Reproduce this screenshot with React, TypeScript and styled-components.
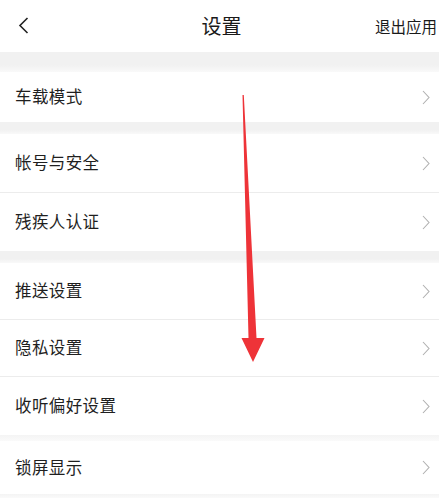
import React from "react";
import styled, { createGlobalStyle } from "styled-components";

const Global = createGlobalStyle`
  html, body { margin: 0; padding: 0; background: #fff; }
  body { font-family: "Noto Sans CJK SC", "Noto Sans", sans-serif; color: #1f1f1f; }
`;

const Page = styled.div`
  position: relative;
  width: 439px;
  height: 498px;
  overflow: hidden;
  background: #fff;
  display: flex;
  flex-direction: column;
`;

const Header = styled.div`
  height: 52px;
  display: grid;
  grid-template-columns: 1fr auto 1fr;
  align-items: center;
  padding: 0 2px;
`;

const BackBtn = styled.div`
  display: flex;
  align-items: center;
  height: 16px;
  margin-top: -2px;
  margin-left: 16px;
`;

const Title = styled.div`
  font-size: 20px;
  color: #1a1a1a;
  margin-left: 4px;
  margin-top: -1px;
`;

const Exit = styled.div`
  justify-self: end;
  font-size: 15.5px;
  color: #1a1a1a;
  margin-top: -1px;
`;

const Gap = styled.div<{ h: number; light?: boolean }>`
  height: ${(p) => p.h}px;
  flex-shrink: 0;
  background: ${(p) =>
    p.light ? "linear-gradient(#f4f4f4, #fafafa)" : "linear-gradient(#f1f1f1 65%, #f9f9f9)"};
`;

const Row = styled.div<{ h: number; line?: boolean }>`
  height: ${(p) => p.h}px;
  flex-shrink: 0;
  display: flex;
  align-items: center;
  justify-content: space-between;
  padding: 0 9px 0 15px;
  box-sizing: border-box;
  border-bottom: ${(p) => (p.line ? "1px solid #ececec" : "none")};
`;

const Label = styled.span`
  font-size: 16.5px;
  color: #1f1f1f;
  letter-spacing: 0.4px;
  margin-top: -2px;
`;

const Chevron = () => (
  <svg width="8" height="15" viewBox="0 0 8 15">
    <path d="M1 1 L7 7.5 L1 14" fill="none" stroke="#b0b0b0" strokeWidth="1.1" />
  </svg>
);

const Arrow = styled.svg`
  position: absolute;
  left: 0;
  top: 0;
  pointer-events: none;
`;

const items: { label: string; h: number; line?: boolean; after?: { h: number; light?: boolean } }[] = [
  { label: "车载模式", h: 50, after: { h: 12 } },
  { label: "帐号与安全", h: 59, line: true },
  { label: "残疾人认证", h: 58, after: { h: 12 } },
  { label: "推送设置", h: 57, line: true },
  { label: "隐私设置", h: 57, line: true },
  { label: "收听偏好设置", h: 58, after: { h: 6, light: true } },
  { label: "锁屏显示", h: 53, after: { h: 4, light: true } },
];

export default function App() {
  return (
    <>
      <Global />
      <Page>
        <Header>
          <BackBtn>
            <svg width="11" height="17" viewBox="0 0 11 17">
              <path d="M9.5 1 L2 8.5 L9.5 16" fill="none" stroke="#222" strokeWidth="1.6" />
            </svg>
          </BackBtn>
          <Title>设置</Title>
          <Exit>退出应用</Exit>
        </Header>
        <Gap h={20} />
        {items.map((it) => (
          <React.Fragment key={it.label}>
            <Row h={it.h} line={it.line}>
              <Label>{it.label}</Label>
              <Chevron />
            </Row>
            {it.after && <Gap h={it.after.h} light={it.after.light} />}
          </React.Fragment>
        ))}
        <Arrow width="439" height="498" viewBox="0 0 439 498">
          <polygon
            points="242.5,95 243.8,95 256.5,338 264.5,338 253,362 241.5,338 248.5,338"
            fill="#ee3338"
          />
        </Arrow>
      </Page>
    </>
  );
}
